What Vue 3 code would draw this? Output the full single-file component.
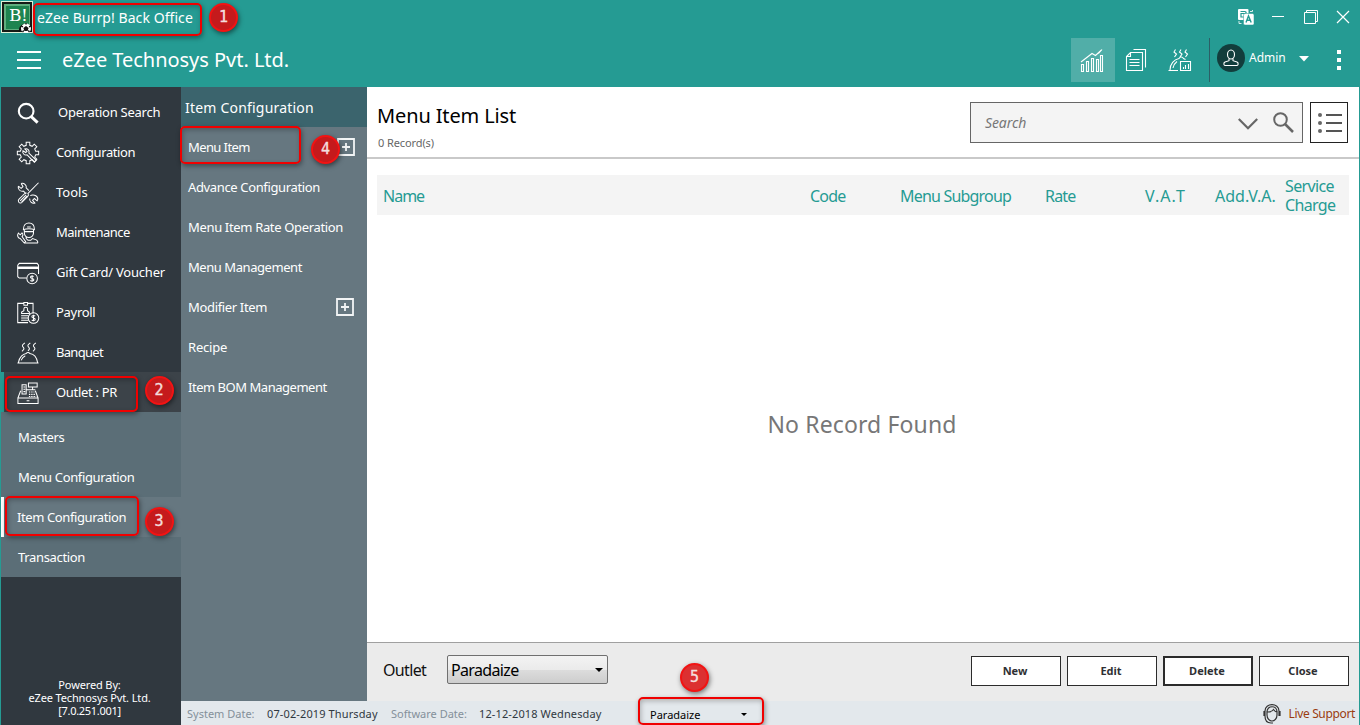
<script setup>
const nav = [
  { icon: 'search', label: 'Operation Search', cls: 'n-search' },
  { icon: 'gear', label: 'Configuration', cls: 'n-conf' },
  { icon: 'tools', label: 'Tools', cls: 'n-tools' },
  { icon: 'worker', label: 'Maintenance', cls: 'n-maint' },
  { icon: 'card', label: 'Gift Card/ Voucher', cls: 'n-gift' },
  { icon: 'payroll', label: 'Payroll', cls: 'n-pay' },
  { icon: 'dish', label: 'Banquet', cls: 'n-banq' },
  { icon: 'register', label: 'Outlet : PR', cls: 'n-outlet active' },
]
const outletNav = [
  { label: 'Masters' },
  { label: 'Menu Configuration' },
  { label: 'Item Configuration', active: true },
  { label: 'Transaction' },
]
const items = [
  { label: 'Menu Item', add: true, cls: 's-menu' },
  { label: 'Advance Configuration', cls: 's-adv' },
  { label: 'Menu Item Rate Operation', cls: 's-rate' },
  { label: 'Menu Management', cls: 's-mgmt' },
  { label: 'Modifier Item', add: true, cls: 's-mod' },
  { label: 'Recipe', cls: 's-rec' },
  { label: 'Item BOM Management', cls: 's-bom' },
]
const columns = ['Name', 'Code', 'Menu Subgroup', 'Rate', 'V.A.T', 'Add.V.A.', 'Service Charge']
const buttons = ['New', 'Edit', 'Delete', 'Close']
const gear = Array.from({ length: 8 }, (_, i) => {
  const step = Math.PI / 4
  const a = i * step - Math.PI / 2
  const pt = (r, t) => `${(12 + r * Math.cos(t)).toFixed(2)} ${(12 + r * Math.sin(t)).toFixed(2)}`
  return `${i ? 'L' : 'M'}${pt(8.6, a - 0.23)}L${pt(11.8, a - 0.17)}L${pt(11.8, a + 0.17)}L${pt(8.6, a + 0.23)}`
}).join('') + 'Z'
</script>

<template>
  <div class="window">
    <header class="head">
      <div class="titlebar">
        <svg class="logo" viewBox="0 0 32 32">
          <rect width="32" height="32" fill="#dff0d8" />
          <rect x="1" y="1" width="30" height="30" fill="#151a16" />
          <rect x="3" y="3" width="26" height="26" fill="#5fae7e" />
          <rect x="5" y="5" width="23" height="23" fill="#1e8450" />
          <text x="8" y="20" class="logo-text">B!</text>
          <path d="M18 31c-1-5 3-9 8-8l5 3v5z" fill="#111" />
          <circle cx="25" cy="27.500" r="5" fill="#fff" />
          <path d="M25 25l2.600 1.900-1 3h-3.200l-1-3z" fill="#111" />
          <path d="M20 25l2 .8M25 22v1.500M30 25l-2 .8M21.500 31l1.200-1.500M28.500 31l-1.200-1.500" stroke="#111" stroke-width="1.300" />
        </svg>
        <span class="app-name">eZee Burrp! Back Office</span>
        <div class="win-controls">
          <svg class="translate" viewBox="0 0 16 16">
            <rect x="0" y="0" width="10.500" height="11" rx="1" fill="#fff" />
            <path d="M2.500 2.500h4.500c1.500 0 1.500 2 0 2H3v3.500h3" fill="none" stroke="#259b93" stroke-width="1.200" />
            <rect x="5.500" y="4.500" width="10.500" height="11.500" rx="1.500" fill="#fff" stroke="#259b93" stroke-width=".5" />
            <path d="M8 13.500l2.500-6.500 2.700 6.500M9 11.300h3.500" fill="none" stroke="#259b93" stroke-width="1.400" />
            <path d="M12 2.500h2.500V1M1 12v2.500h2.500" fill="none" stroke="#d5eeec" />
          </svg>
          <svg class="minimize" viewBox="0 0 12 12"><path d="M0 5.500h12" stroke="#fff" /></svg>
          <svg class="restore" viewBox="0 0 14 14"><path d="M.5 2.500h11v11H.5zM2.500 2.500v-2h11v11h-2" fill="none" stroke="#fff" /></svg>
          <svg class="closex" viewBox="0 0 14 14"><path d="M1 1l12 12M13 1L1 13" fill="none" stroke="#fff" stroke-width="1.200" /></svg>
        </div>
      </div>
      <div class="toolbar">
        <div class="burger"><i></i><i></i><i></i></div>
        <h1>eZee Technosys Pvt. Ltd.</h1>
        <div class="tools">
          <div class="tool on">
            <svg width="24" height="24" viewBox="0 0 24 24" class="ln">
              <path d="M1.500 16.500h2v7h-2zM6.500 13.500h2v10h-2zM11.500 10.500h2v13h-2zM16.500 11.500h2v12h-2zM20.500 7.500h2v16h-2z" />
              <path d="M1 14L12 5.500l3.500 2L21.500 2M18.500 5.500L22 1.500" />
            </svg>
          </div>
          <div class="tool">
            <svg width="22" height="24" viewBox="0 0 22 24" class="ln">
              <path d="M5.500 4.500h12v18H1.500v-14zM5.500 4.500v4h-4M8.500 1.500h12v18M4.500 11.500h10M4.500 14.500h10M4.500 17.500h10" />
            </svg>
          </div>
          <div class="tool">
            <svg width="24" height="24" viewBox="0 0 24 24" class="ln">
              <path d="M7.500 1.500l-1.500 2.500 2.500 2-2 3M13 1.500l-1.500 2.500 2.500 2-2 3M18.500 1.500l-1.500 2.500 2.500 2-2 3M.5 22.500h9.500M2 22c0-6 4-10.500 9-11.500 1-2 3.500-2 4.500 0l2 1M5 20c.5-3 2-5 4-6.500" />
              <path d="M12.500 13.500h10v9h-10zM15.500 21v-2M17.500 21v-4M20.500 21v-5" />
            </svg>
          </div>
        </div>
        <div class="user">
          <div class="avatar">
            <svg width="16" height="18" viewBox="0 0 16 18" class="ln">
              <ellipse cx="8" cy="5.500" rx="3.500" ry="4.500" />
              <path d="M6 9.500v2.200l-4 1.300c-2 1-1 3.500 0 3.500h12c1 0 2-2.500 0-3.500l-4-1.300V9.500" />
            </svg>
          </div>
          <span>Admin</span>
          <svg class="caret" width="10" height="6" viewBox="0 0 10 6"><path d="M0 0h10L5 5.500z" fill="#fff" /></svg>
        </div>
        <div class="dots"><i></i><i></i><i></i></div>
      </div>
    </header>

    <div class="body">
      <aside class="side">
        <nav>
          <div v-for="n in nav" :key="n.label" class="nav-item" :class="n.cls">
            <svg class="nav-icon ln" viewBox="0 0 24 24">
              <g v-if="n.icon === 'search'" stroke-width="2.300">
                <circle cx="10" cy="10" r="8" /><path d="M15.500 16l7 6.500" stroke-width="3.200" />
              </g>
              <g v-else-if="n.icon === 'gear'">
                <path :d="gear" />
                <path d="M8.500 7.500c3-1 5.500 1.500 4.500 4.500l8 8-2 2-8-8c-3 1-5.500-2-4.500-4.500l3 2 1.500-1.500z" />
              </g>
              <g v-else-if="n.icon === 'tools'">
                <path d="M4.500 1.500c3-1 6.500 2 5.500 5l3 3M1.500 4.500c-1 3 2 6.500 5.500 5.500l2.500 2.500M1.500 4.500l3 2.500 2-2-2-3.500" />
                <path d="M14.500 15c1-1 4-1.500 6 0s2.500 4 1.500 5.500l-3-2.500-2 2 2.500 3c-3 1-6.500-2-5.500-5" />
                <path d="M23.500 .8L11.500 13M10.500 12c-2 0-3 1-4 2.500L2 19c-1.500 2 .5 5 3 3.500l6.500-6.500c1-1 1.500-2 .5-3.500M3.500 20.500l6.500-6.500M5 22l6-6.500" />
              </g>
              <g v-else-if="n.icon === 'worker'">
                <path d="M7 8C7 3.500 9.500 1 13 1S19 3.500 19 8M6.500 8.500c4-1.500 9-1.500 13 0M11 5.500h4M8 8v4c0 3 2.500 5 5 5s5-2 5-5V8M8.500 10.500h9M10 16v2l2 2h3l2-2 4 1.500c2 1 2 3.500 1 3.500H8.500" />
                <path d="M1.500 12l2 2 2-2c1.500 1 1 3 0 4l4 5.500-1.500 1.500-4.500-5c-2 0-4-3-2-6z" />
              </g>
              <g v-else-if="n.icon === 'card'">
                <path d="M10.500 17.500H2.500L.8 16V3.500L2.500 1.500h19.500L23.500 3.500V13" />
                <path d="M.5 6.300h23.300" stroke-width="2.700" /><circle cx="16.500" cy="18" r="5.800" />
                <path d="M18.300 15.800c-1-1-3.600-.7-3.600 .8 0 1.800 3.700 1 3.700 2.800 0 1.600-2.700 1.800-3.800.6M16.500 14.400v7.200" />
              </g>
              <g v-else-if="n.icon === 'payroll'">
                <path d="M12 22.500H.8v-21h6.500M11.500 1.500h6v11M7.500 .5h4v3h-4zM4.500 20h8M4.500 17.500h8M4.500 15h8M5 12.500v-1.500l2.500-1.500v-2c0-2.500 4-2.500 4 0v2l2 1.500v1.500z" />
                <circle cx="18" cy="17.500" r="5.800" />
                <path d="M19.800 15.300c-1-1-3.600-.7-3.600 .8 0 1.800 3.700 1 3.700 2.800 0 1.600-2.700 1.800-3.800.6M18 13.900v7.200" />
              </g>
              <g v-else-if="n.icon === 'dish'">
                <path d="M8.500 1c-1.500 1.500-3.500 2.200-2.500 3.700s2 1.800 1.500 3-1.500 1.800-2 2.500M14.500 1c-1.500 1.500-3.500 2.200-2.500 3.700s2 1.800 1.500 3-1 1.300-1.500 2M20.500 1c-1.500 1.500-3.500 2.200-2.500 3.700s2 1.800 1.500 3-1.500 1.800-2 2.500M.5 22.800h23M1.500 22.500c1-6 5-9.500 8.500-10 1-1.500 3-1.500 4 0 4 .5 7.500 4 8.500 10M4.500 20c1-2.500 2.500-4 4.500-5" />
              </g>
              <g v-else>
                <path d="M1 17.500h22v6H1zM1 17.500L4 9.500M23 17.500l-3-8M5.500 13v-10h4.500v10zM7 5.500h2M7 8h2M7 10.500h2M12.500 1h9.500v4.500h-9.500zM17 5.500v3M10.500 8.500H20M10.500 20.500h3" />
                <path d="M13 11h6M13 13.500h7M13 15.800h8" stroke-dasharray="1.500 1" />
              </g>
            </svg>
            <span>{{ n.label }}</span>
          </div>
        </nav>
        <nav class="outlet-nav">
          <div v-for="o in outletNav" :key="o.label" class="outlet-item" :class="{ active: o.active }">{{ o.label }}</div>
        </nav>
        <div class="powered">Powered By:<br />eZee Technosys Pvt. Ltd.<br /><span>[7.0.251.001]</span></div>
      </aside>

      <div class="right">
        <div class="work">
          <aside class="sub">
            <h2>Item Configuration</h2>
            <div v-for="i in items" :key="i.label" class="sub-item" :class="i.cls">
              <span>{{ i.label }}</span>
              <svg v-if="i.add" width="18" height="18" viewBox="0 0 18 18"><path d="M1 1h16v16H1zM5 9h8M9 5v8" fill="none" stroke="#f2f4f5" stroke-width="1.800" /></svg>
            </div>
          </aside>
          <main>
            <div class="list-head">
              <div class="list-title"><h3>Menu Item List</h3><p>0 Record(s)</p></div>
              <div class="search">
                <span>Search</span>
                <svg width="20" height="12" viewBox="0 0 20 12"><path d="M.8 1l9.200 9.200L19.200 1" fill="none" stroke="#666" stroke-width="2.200" /></svg>
                <svg class="mag" width="21" height="21" viewBox="0 0 21 21"><circle cx="7.500" cy="7.500" r="6.300" fill="none" stroke="#666" stroke-width="2" /><path d="M12 12l8 8" stroke="#666" stroke-width="2.500" /></svg>
              </div>
              <div class="list-btn">
                <svg width="24" height="20" viewBox="0 0 24 20">
                  <g fill="#666"><circle cx="2" cy="2" r="2" /><circle cx="2" cy="10" r="2" /><circle cx="2" cy="18" r="2" /></g>
                  <path d="M8 2h16M8 10h16M8 18h16" stroke="#555" stroke-width="2" />
                </svg>
              </div>
            </div>
            <div class="grid-area">
              <div class="cols"><div v-for="c in columns" :key="c">{{ c }}</div></div>
              <div class="empty">No Record Found</div>
            </div>
            <div class="actions">
              <label>Outlet</label>
              <div class="combo"><span>Paradaize</span><svg width="8" height="4" viewBox="0 0 8 4"><path d="M0 0h8L4 4z" /></svg></div>
              <div class="btns"><button v-for="b in buttons" :key="b" :class="{ focus: b === 'Delete' }">{{ b }}</button></div>
            </div>
          </main>
        </div>
        <footer>
          <span class="k sys">System Date:</span><span class="v sysv">07-02-2019 Thursday</span>
          <span class="k soft">Software Date:</span><span class="v softv">12-12-2018 Wednesday</span>
          <span class="picker">Paradaize</span>
          <svg class="tri" width="6" height="3" viewBox="0 0 6 3"><path d="M0 0h6L3 3z" /></svg>
          <div class="live">
            <svg width="18" height="20" viewBox="0 0 18 20" fill="none" stroke="#333" stroke-width="1.200">
              <path d="M2 7C2-1.500 16-1.500 16 7M4 8c0-7 10-7 10 0M4 7v4c0 3.500 2.500 6 5 6s5-2.500 5-6V7M4.500 8c3 0 5-1 6-2.500 1 1.500 2 2.500 3.500 2.500M2 12c0 4 2 7 6 7h2" />
              <path d="M1.500 7v5M16.500 7v5" stroke-width="2.200" />
            </svg>
            <span>Live Support</span>
          </div>
        </footer>
      </div>
    </div>

    <div class="mark m1"></div><div class="mark m2"></div><div class="mark m3"></div><div class="mark m4"></div><div class="mark m5"></div>
    <span v-for="n in 5" :key="n" class="badge" :class="'b' + n">{{ n }}</span>
  </div>
</template>

<style>
body { margin: 0; overflow: hidden; }
</style>

<style scoped>
* { box-sizing: border-box; }
h1, h2, h3, p { margin: 0; font-weight: 400; }
.window { position: relative; width: 1360px; height: 725px; overflow: hidden; display: flex; flex-direction: column; background: #259b93; font-family: "Noto Sans", "Open Sans", sans-serif; font-size: 13px; color: #fff; white-space: nowrap; }
.ln { fill: none; stroke: #fff; stroke-width: 1.1; }
.head { height: 87px; flex: none; }
.titlebar { display: flex; height: 36px; }
.logo { width: 32px; height: 32px; margin: 1px 4px 0 1px; }
.logo-text { font: 17px "DejaVu Serif", serif; letter-spacing: -.5px; fill: #fff; }
.app-name { font-size: 14px; line-height: 36px; letter-spacing: .07px; }
.win-controls { margin-left: auto; display: flex; align-items: center; padding-right: 10px; padding-bottom: 2px; }
.translate { width: 16px; height: 16px; margin-right: 18px; }
.minimize { width: 12px; height: 12px; margin-right: 20px; }
.restore { width: 14px; height: 14px; margin-right: 18px; }
.closex { width: 14px; height: 14px; }
.win-controls .minimize { margin-left: 0; }
.toolbar { display: flex; height: 48px; align-items: center; }
.burger { width: 24px; margin-left: 17px; height: 18px; display: flex; flex-direction: column; justify-content: space-between; }
.burger i { height: 2px; background: #fff; }
.toolbar h1 { font-size: 20px; margin: -2px 0 0 21px; letter-spacing: -.03px; }
.tools { margin-left: auto; display: flex; height: 44px; border-right: 1px solid #2c5f66; }
.tool { width: 44px; display: flex; align-items: center; justify-content: center; padding-right: 2px; }
.tool.on { background: #51aea8; }
.tool:last-child { margin-right: 6px; }
.user { display: flex; align-items: center; width: 100px; margin-left: 7px; }
.avatar { width: 28px; height: 28px; border-radius: 50%; background: #123d3c; display: flex; align-items: center; justify-content: center; margin: -4px 4px 0 0; }
.user span { font-size: 12px; width: 50px; margin-top: -5px; }
.caret { margin-top: -2px; }
.dots { display: flex; flex-direction: column; gap: 4px; width: 4px; margin: 0 19px 0 20px; }
.dots i { width: 4px; height: 4px; background: #fff; }

.body { flex: 1; display: flex; padding: 0 1px; min-height: 0; }
.side { width: 180px; background: #30383f; padding-top: 5px; display: flex; flex-direction: column; }
.nav-item { height: 40px; display: flex; align-items: center; padding-left: 16px; font-size: 13px; }
.nav-icon { width: 22px; height: 22px; margin: 1px 17px 0 0; overflow: visible; }
.n-search .nav-icon { margin-right: 19px; }
.n-search { letter-spacing: -.26px; }
.n-conf { letter-spacing: -.4px; }
.n-maint { letter-spacing: -.5px; }
.n-gift { letter-spacing: -.2px; }
.n-pay { letter-spacing: -.3px; }
.n-banq { letter-spacing: -.7px; }
.n-outlet { letter-spacing: -.3px; }
.nav-item.active { background: #3c4349; border-left: 3px solid #259b93; padding-left: 13px; }
.outlet-nav { background: #5b6e77; height: 165px; padding-top: 5px; }
.outlet-item { height: 40px; line-height: 40px; padding-left: 17px; letter-spacing: -.36px; }
.outlet-item.active { background: #667780; border-left: 3px solid #fff; padding-left: 13px; letter-spacing: -.4px; }
.outlet-item:last-child { letter-spacing: -.34px; }
.powered { margin-top: auto; font-size: 11px; line-height: 13px; text-align: center; padding: 0 3px 8px 0; letter-spacing: -.13px; }
.powered span { letter-spacing: -.3px; }
.right { flex: 1; display: flex; flex-direction: column; }
.work { flex: 1; display: flex; min-height: 0; }
.sub { width: 186px; background: #667780; }
.sub h2 { height: 40px; line-height: 41px; padding-left: 4px; background: #3b646d; font-size: 14px; letter-spacing: .2px; }
.sub-item { height: 40px; padding: 0 13px 0 7px; display: flex; align-items: center; justify-content: space-between; }
.s-menu { padding-right: 12px; letter-spacing: -.6px; }
.s-adv { letter-spacing: -.36px; }
.s-rate { letter-spacing: -.34px; }
.s-mgmt { letter-spacing: -.44px; }
.s-mod { letter-spacing: -.34px; }
.s-rec { letter-spacing: -.2px; }
.s-bom { letter-spacing: -.47px; }

main { flex: 1; background: #fff; color: #111; display: flex; flex-direction: column; min-width: 0; }
.list-head { height: 72px; border-bottom: 2px solid #c9c9c9; display: flex; align-items: flex-start; padding: 15px 11px 0 10px; flex: none; }
.list-title { flex: 1; }
.list-title h3 { font-size: 20px; line-height: 27px; color: #000; letter-spacing: -.13px; }
.list-title p { font-size: 11px; line-height: 16px; margin: 6px 0 0 1px; color: #666; letter-spacing: -.1px; }
.search { width: 333px; height: 41px; border: 1px solid #666; background: #f4f4f4; display: flex; align-items: center; padding: 0 8px 0 14px; margin-right: 7px; }
.search span { flex: 1; font-style: italic; font-size: 14px; letter-spacing: -.1px; color: #777; }
.search svg { margin-top: 2px; }
.search .mag { margin: 0 0 1px 15px; }
.list-btn { width: 38px; height: 41px; border: 1px solid #222; display: flex; align-items: center; justify-content: center; padding: 0 0 0 2px; }
.grid-area { flex: 1; display: flex; flex-direction: column; padding: 16px 10px 0; }
.cols { height: 40px; flex: none; background: #f4f4f4; padding: 2px 0 0 6px; display: grid; grid-template-columns: 427px 90px 145px 100px 70px 70px 64px; align-items: center; color: #259b93; font-size: 16px; line-height: 19px; letter-spacing: -.8px; }
.cols div:nth-child(1) { letter-spacing: -1px; }
.cols div:nth-child(5) { letter-spacing: 1.1px; }
.cols div:nth-child(6) { letter-spacing: 0; }
.cols div:last-child { white-space: normal; width: 60px; letter-spacing: -.65px; }
.empty { flex: 1; display: flex; align-items: center; justify-content: center; font-size: 23px; letter-spacing: .12px; color: #777; padding: 0 2px 9px 0; }
.actions { height: 59px; flex: none; border-top: 1px solid #a0a0a0; background: #ebebeb; display: flex; align-items: center; padding: 0 10px 5px 16px; }
.actions label { width: 64px; font-size: 16px; letter-spacing: -.65px; color: #111; padding-top: 1px; }
.combo { width: 161px; height: 29px; border: 1px solid #707070; border-radius: 2px; background: linear-gradient(#f3f3f3, #ebebeb 50%, #ddd 50%, #cdcdcd); display: flex; align-items: center; justify-content: space-between; padding: 1px 4px 0 3px; font-size: 16px; letter-spacing: -.65px; color: #000; }
.btns { margin: 2px 0 0 auto; display: flex; gap: 6px; }
button { width: 90px; height: 30px; border: 1px solid #2b2b2b; background: #fff; font: bold 11px "Noto Sans", sans-serif; color: #2f3033; padding: 0 2px 0 0; }
button.focus { border-width: 2px; }
footer { height: 24px; flex: none; background: #e3e8ec; display: flex; align-items: center; padding: 1px 4px 0 6px; font-size: 11px; }
.k { color: #84909a; }
.v { color: #30383f; letter-spacing: .12px; }
.sys { width: 80px; }
.sysv { width: 124px; }
.soft { width: 88px; }
.softv { width: 171px; }
.picker { color: #000; width: 91px; padding-top: 1px; }
.tri { margin-top: 2px; }
.live { margin-left: auto; display: flex; align-items: center; color: #9a3c10; gap: 8px; font-size: 12px; letter-spacing: -.35px; }

.mark { position: absolute; border: 2px solid #f00000; border-radius: 5px; box-shadow: 1px 2px 5px rgba(0, 0, 0, .4), inset 1px 2px 5px rgba(0, 0, 0, .25); }
.m1 { left: 33px; top: 3px; width: 169px; height: 33px; }
.m2 { left: 5px; top: 376px; width: 133px; height: 36px; }
.m3 { left: 5px; top: 496px; width: 134px; height: 40px; }
.m4 { left: 180px; top: 126px; width: 121px; height: 38px; }
.m5 { left: 638px; top: 697px; width: 126px; height: 28px; }
.badge { position: absolute; width: 29px; height: 29px; border: 2px solid #f21313; border-radius: 50%; background: #c51a1c; box-shadow: 1px 2px 5px rgba(0, 0, 0, .5); font: 15px/25px "DejaVu Sans Mono", monospace; -webkit-text-stroke: .4px #f4dede; text-align: center; color: #f4dede; }
.b1 { left: 209px; top: 3px; }
.b2 { left: 145px; top: 376px; padding-right: 1px; }
.b3 { left: 145px; top: 507px; padding-right: 1px; }
.b4 { left: 311px; top: 135px; }
.b5 { left: 680px; top: 663px; background: #dc3031; }
</style>
